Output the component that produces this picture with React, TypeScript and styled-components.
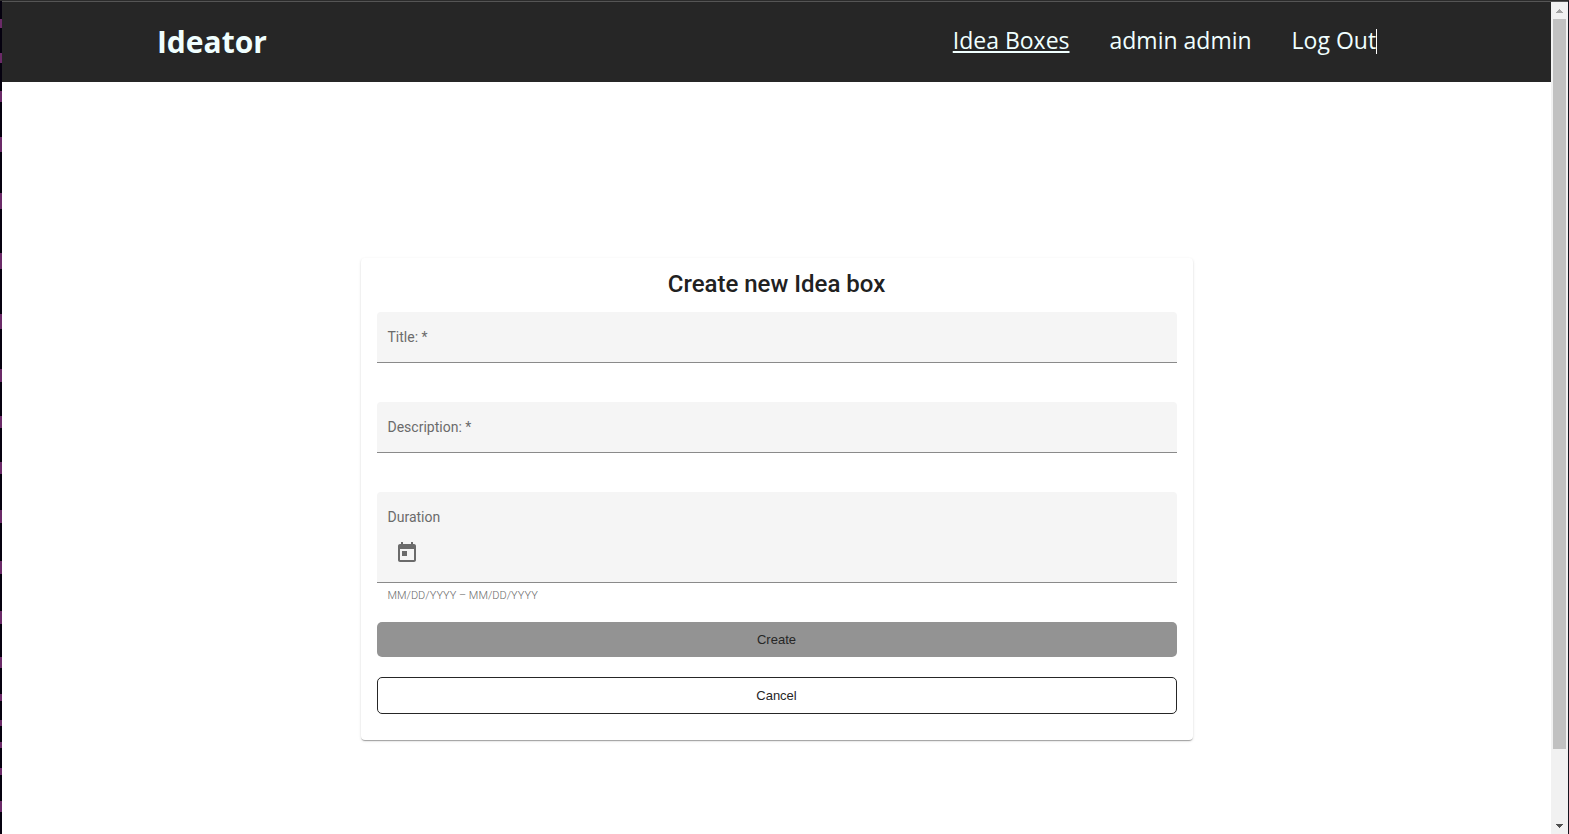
import React from "react";
import styled, { createGlobalStyle } from "styled-components";

const GlobalStyle = createGlobalStyle`
  *, *::before, *::after { box-sizing: border-box; }
  html, body, #root { height: 100%; }
  body {
    margin: 0;
    overflow: hidden;
    background: #fff;
    font-family: Roboto, "Liberation Sans", sans-serif;
    color: #212121;
  }
`;

const purpleMarks = [
  [19, 9], [53, 10], [91, 11], [137, 15], [193, 16], [253, 16], [314, 15],
  [369, 13], [416, 12], [462, 12], [510, 13], [561, 13], [611, 13],
  [657, 11], [694, 7], [720, 6], [742, 6], [768, 7], [801, 11],
];

const Window = styled.div`
  display: grid;
  grid-template-columns: 2px minmax(0, 1fr) 17px 1px;
  height: 100vh;
  border-top: 1px solid #2b2b2b;
  background: #fff;
`;

const LeftEdge = styled.svg`
  display: block;
  width: 2px;
  height: 100%;
  background: #05010f;
`;

const RightEdge = styled.div`
  background: #14141e;
`;

const Page = styled.div`
  display: flex;
  flex-direction: column;
  min-height: 0;
  border-top: 1px solid #555;
`;

const Header = styled.header`
  display: flex;
  flex: none;
  align-items: center;
  justify-content: space-between;
  height: 80px;
  padding: 0 10% 2px;
  background: #262626;
  color: azure;
  font-family: "Open Sans", "Noto Sans", sans-serif;
`;

const Brand = styled.a`
  color: inherit;
  font-size: 30px;
  font-weight: 700;
  text-decoration: none;
`;

const Nav = styled.nav`
  display: flex;
`;

const NavLink = styled.a<{ $active?: boolean; $caret?: boolean }>`
  position: relative;
  padding: 0 20px 2px;
  color: inherit;
  font-size: 23px;
  line-height: 26px;
  text-decoration: ${(p) => (p.$active ? "underline" : "none")};
  text-decoration-thickness: 2px;
  text-underline-offset: 2px;

  &::after {
    content: ${(p) => (p.$caret ? '""' : "none")};
    position: absolute;
    right: 19px;
    bottom: 1px;
    width: 1px;
    height: 25px;
    background: #fff;
  }
`;

const Main = styled.main`
  display: flex;
  flex: 1;
  align-items: flex-start;
  justify-content: center;
  padding: 176px 16px 0;
`;

const Card = styled.form`
  display: flex;
  flex-direction: column;
  width: 100%;
  max-width: 832px;
  padding: 12px 16px 26px;
  border-radius: 4px;
  background: #fff;
  box-shadow: 0 2px 1px -1px rgba(0, 0, 0, 0.2), 0 1px 1px rgba(0, 0, 0, 0.14),
    0 1px 3px rgba(0, 0, 0, 0.12);
`;

const Title = styled.h1`
  margin: 0 0 14px;
  font-size: 24px;
  font-weight: 500;
  line-height: 28px;
  text-align: center;
`;

const Field = styled.div`
  display: flex;
  flex-direction: column;
  margin-bottom: 39px;
  padding: 0 11px;
  border-bottom: 1px solid #8a8a8a;
  border-radius: 4px 4px 0 0;
  background: #f5f5f5;
`;

const TextField = styled(Field)`
  display: grid;
  height: 51px;
  align-items: center;

  > * { grid-area: 1 / 1; }
`;

const DateField = styled(Field)`
  height: 91px;
  margin-bottom: 5px;
  padding-top: 17px;
`;

const Label = styled.label`
  color: #6b6b6b;
  font-size: 14px;
  line-height: 16px;
`;

const Input = styled.input`
  width: 100%;
  height: 30px;
  border: 0;
  outline: 0;
  background: transparent;
  font: inherit;
`;

const DateButton = styled.button`
  display: flex;
  align-items: center;
  justify-content: center;
  width: 38px;
  height: 40px;
  margin-top: 8px;
  padding: 0;
  border: 0;
  border-radius: 50%;
  background: transparent;
  color: #6b6b6b;
`;

const Hint = styled.div`
  margin-bottom: 18px;
  padding: 0 11px;
  color: #6b6b6b;
  font-size: 11px;
  font-weight: 300;
  line-height: 16px;
`;

const Action = styled.button<{ $outlined?: boolean }>`
  height: ${(p) => (p.$outlined ? 37 : 35)}px;
  margin-top: ${(p) => (p.$outlined ? 20 : 0)}px;
  padding: 0;
  border: ${(p) => (p.$outlined ? "1px solid #262626" : "0")};
  border-radius: 5px;
  background: ${(p) => (p.$outlined ? "#fff" : "#939393")};
  color: #262626;
  font-family: "Liberation Sans", Arial, sans-serif;
  font-size: 13px;
`;

const Scrollbar = styled.div`
  display: flex;
  flex-direction: column;
  align-items: center;
  border-top: 1px solid #555;
  background: #f1f1f1;
`;

const Thumb = styled.div`
  flex: 1;
  width: 13px;
  margin-bottom: 68px;
  background: #c1c1c1;
`;

const Arrow = ({ down }: { down?: boolean }) => (
  <svg width="17" height="17" viewBox="0 0 17 17" shapeRendering="crispEdges">
    {down ? (
      <path d="M5 7h7v1h-1v1h-1v1H9v1H8v-1H7V9H6V8H5z" fill="#505050" />
    ) : (
      <path d="M5 11h7v-1h-1V9h-1V8H9V7H8v1H7v1H6v1H5z" fill="#a3a3a3" />
    )}
  </svg>
);

export default function App() {
  return (
    <Window>
      <GlobalStyle />
      <LeftEdge aria-hidden="true">
        {purpleMarks.map(([y, height]) => (
          <rect key={y} y={y - 1} width="2" height={height} fill="#6b2a68" />
        ))}
      </LeftEdge>
      <Page>
        <Header>
          <Brand href="#">Ideator</Brand>
          <Nav>
            <NavLink href="#boxes" $active>Idea Boxes</NavLink>
            <NavLink href="#profile">admin admin</NavLink>
            <NavLink href="#logout" $caret>Log Out</NavLink>
          </Nav>
        </Header>
        <Main>
          <Card>
            <Title>Create new Idea box</Title>
            <TextField>
              <Label htmlFor="title">Title: *</Label>
              <Input id="title" />
            </TextField>
            <TextField>
              <Label htmlFor="description">Description: *</Label>
              <Input id="description" />
            </TextField>
            <DateField>
              <Label htmlFor="duration">Duration</Label>
              <DateButton id="duration" type="button">
                <svg width="24" height="24" viewBox="0 0 24 24" fill="currentColor">
                  <path d="M19 3h-1V1h-2v2H8V1H6v2H5c-1.11 0-1.99.9-1.99 2L3 19c0 1.1.89 2 2 2h14c1.1 0 2-.9 2-2V5c0-1.1-.9-2-2-2zm0 16H5V8h14v11zM7 10h5v5H7z" />
                </svg>
              </DateButton>
            </DateField>
            <Hint>MM/DD/YYYY – MM/DD/YYYY</Hint>
            <Action type="submit">Create</Action>
            <Action type="button" $outlined>Cancel</Action>
          </Card>
        </Main>
      </Page>
      <Scrollbar aria-hidden="true">
        <Arrow />
        <Thumb />
        <Arrow down />
      </Scrollbar>
      <RightEdge />
    </Window>
  );
}
